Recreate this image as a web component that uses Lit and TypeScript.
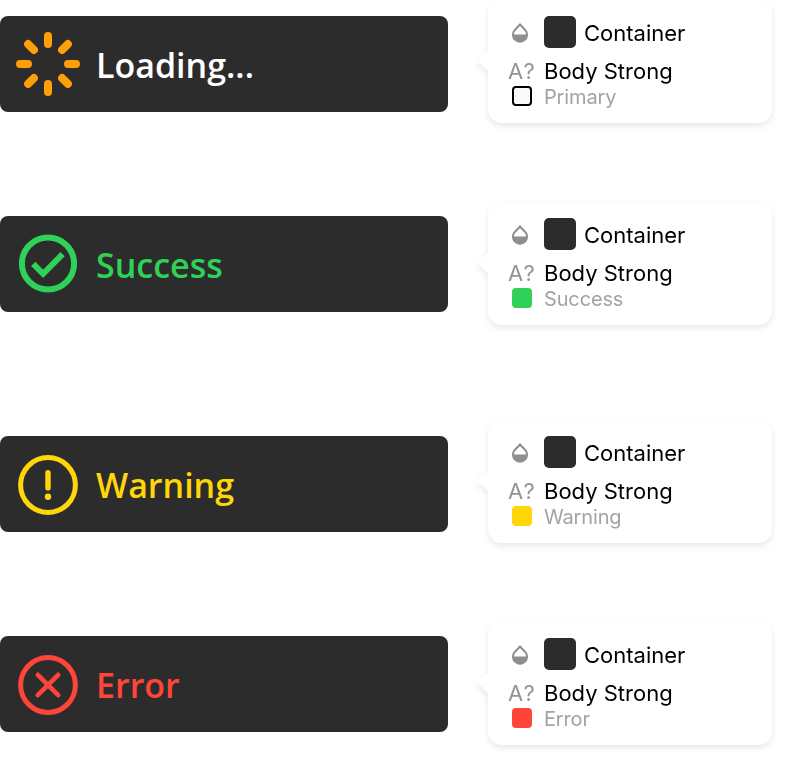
import { LitElement, html, css, svg } from "lit";
import { customElement, property } from "lit/decorators.js";

type Kind = "loading" | "success" | "warning" | "error";

interface Status {
  kind: Kind;
  label: string;
  token: string;
}

const STATUSES: Status[] = [
  { kind: "loading", label: "Loading...", token: "Primary" },
  { kind: "success", label: "Success", token: "Success" },
  { kind: "warning", label: "Warning", token: "Warning" },
  { kind: "error", label: "Error", token: "Error" },
];

const ICONS = {
  loading: svg`<path d="M32 4v8M32 52v8M4 32h8M52 32h8M12.1 12.1l5.8 5.8M46.1 46.1l5.8 5.8M51.9 12.1l-5.8 5.8M17.9 46.1l-5.8 5.8"
    stroke-width="8" stroke-linecap="round" />`,
  success: svg`<circle cx="32" cy="31.5" r="26.1" stroke-width="6" />
    <path d="M17.2 31.8l9.9 10L46.6 22.2" stroke-width="6" stroke-linejoin="miter" />`,
  warning: svg`<circle cx="32" cy="33" r="27.4" stroke-width="5" />
    <path d="M32 20.7v15.2" stroke-width="5.4" stroke-linecap="round" />
    <circle cx="32" cy="44.8" r="3.2" fill="currentColor" stroke="none" />`,
  error: svg`<circle cx="32" cy="33" r="27.4" stroke-width="5" />
    <path d="M21.8 22.8l20.4 20.4M42.2 22.8L21.8 43.2" stroke-width="4.6" stroke-linecap="round" />`,
};

@customElement("status-banner")
class StatusBanner extends LitElement {
  @property() kind: Kind = "loading";
  @property() label = "";

  static styles = css`
    .banner {
      box-sizing: border-box;
      height: 96px;
      padding: 0 16px;
      border-radius: 8px;
      background: #2c2c2c;
      display: flex;
      align-items: center;
      gap: 16px;
      font: 600 34px/48px "Open Sans", sans-serif;
      white-space: nowrap;
    }
    .icon { width: 64px; height: 64px; flex: none; fill: none; stroke: currentColor; }
    .text { margin-top: 2px; }
    .loading { color: #fff; }
    .loading .icon { color: #ff9f0a; }
    .success { color: #30d158; }
    .warning { color: #ffd60a; }
    .error { color: #ff453a; }
  `;

  render() {
    return html`<div class="banner ${this.kind}">
      <svg class="icon" viewBox="0 0 64 64">${ICONS[this.kind]}</svg>
      <span class="text">${this.label}</span>
    </div>`;
  }
}

@customElement("token-card")
class TokenCard extends LitElement {
  @property() kind: Kind = "loading";
  @property() token = "";

  static styles = css`
    .card {
      position: relative;
      box-sizing: border-box;
      width: 284px;
      height: 123.4px;
      padding: 16px 20px 0;
      border-radius: 14px;
      background: #fff;
      filter: drop-shadow(0 3px 3px rgba(0, 0, 0, 0.09));
      font-family: Inter, sans-serif;
      white-space: nowrap;
    }
    .card::before {
      content: "";
      position: absolute;
      left: -11px;
      top: 50px;
      width: 12px;
      height: 22px;
      background: #fff;
      clip-path: polygon(100% 0, 0 50%, 100% 100%);
    }
    .row { display: grid; grid-template-columns: 24px auto; column-gap: 12px; align-items: center; }
    .fill { height: 32px; }
    .value { display: flex; align-items: center; gap: 8px; }
    .drop { width: 24px; height: 24px; margin-top: 1px; fill: #8e8e8e; }
    .box { width: 32px; height: 32px; border-radius: 5px; background: #2c2c2c; }
    .name { font-size: 22px; line-height: 28px; color: #000; }
    .container { margin-top: 1px; }
    .type { margin-top: 9px; height: 26px; }
    .mark { font-size: 22px; line-height: 26px; letter-spacing: 1.8px; color: #949494; }
    .tone { margin-top: 1px; height: 24px; }
    .swatch { box-sizing: border-box; width: 20px; height: 20px; margin: -1px 0 0 4px; border-radius: 4px; }
    .token { margin-top: 1px; font-size: 20px; line-height: 24px; letter-spacing: -0.15px; color: #a3a3a3; }
    .loading { background: #fafafa; border: 2px solid #000; }
    .success { background: #30d158; }
    .warning { background: #ffd60a; }
    .error { background: #ff453a; }
  `;

  render() {
    return html`<div class="card">
      <div class="row fill">
        <svg class="drop" viewBox="0 0 24 24">
          <path d="M17.66 8L12 2.1 6.34 8C4.78 9.56 4 11.64 4 13.64s.78 4.11 2.34 5.67 3.61 2.35 5.66 2.35 4.1-.79 5.66-2.35S20 15.64 20 13.64 19.22 9.56 17.66 8zM6 13.6c.01-2 .62-3.07 1.76-4.2L12 5.07l4.24 4.38C17.38 10.57 17.99 11.6 18 13.6H6z" />
        </svg>
        <div class="value"><span class="box"></span><span class="name container">Container</span></div>
      </div>
      <div class="row type"><span class="mark">A?</span><span class="name">Body Strong</span></div>
      <div class="row tone"><span class="swatch ${this.kind}"></span><span class="token">${this.token}</span></div>
    </div>`;
  }
}

@customElement("app-root")
class AppRoot extends LitElement {
  static styles = css`
    :host { display: block; }
    .page {
      display: flex;
      gap: 40px;
      height: 766px;
      overflow: hidden;
      background: #fff;
    }
    .banners { display: grid; width: 448px; padding-top: 16px; grid-template-rows: 200px 220px 200px auto; }
    .cards { display: grid; width: 284px; grid-template-rows: 202px 218px 202px auto; }
  `;

  render() {
    return html`<div class="page">
      <div class="banners">
        ${STATUSES.map((s) => html`<status-banner .kind=${s.kind} .label=${s.label}></status-banner>`)}
      </div>
      <div class="cards">
        ${STATUSES.map((s) => html`<token-card .kind=${s.kind} .token=${s.token}></token-card>`)}
      </div>
    </div>`;
  }
}
